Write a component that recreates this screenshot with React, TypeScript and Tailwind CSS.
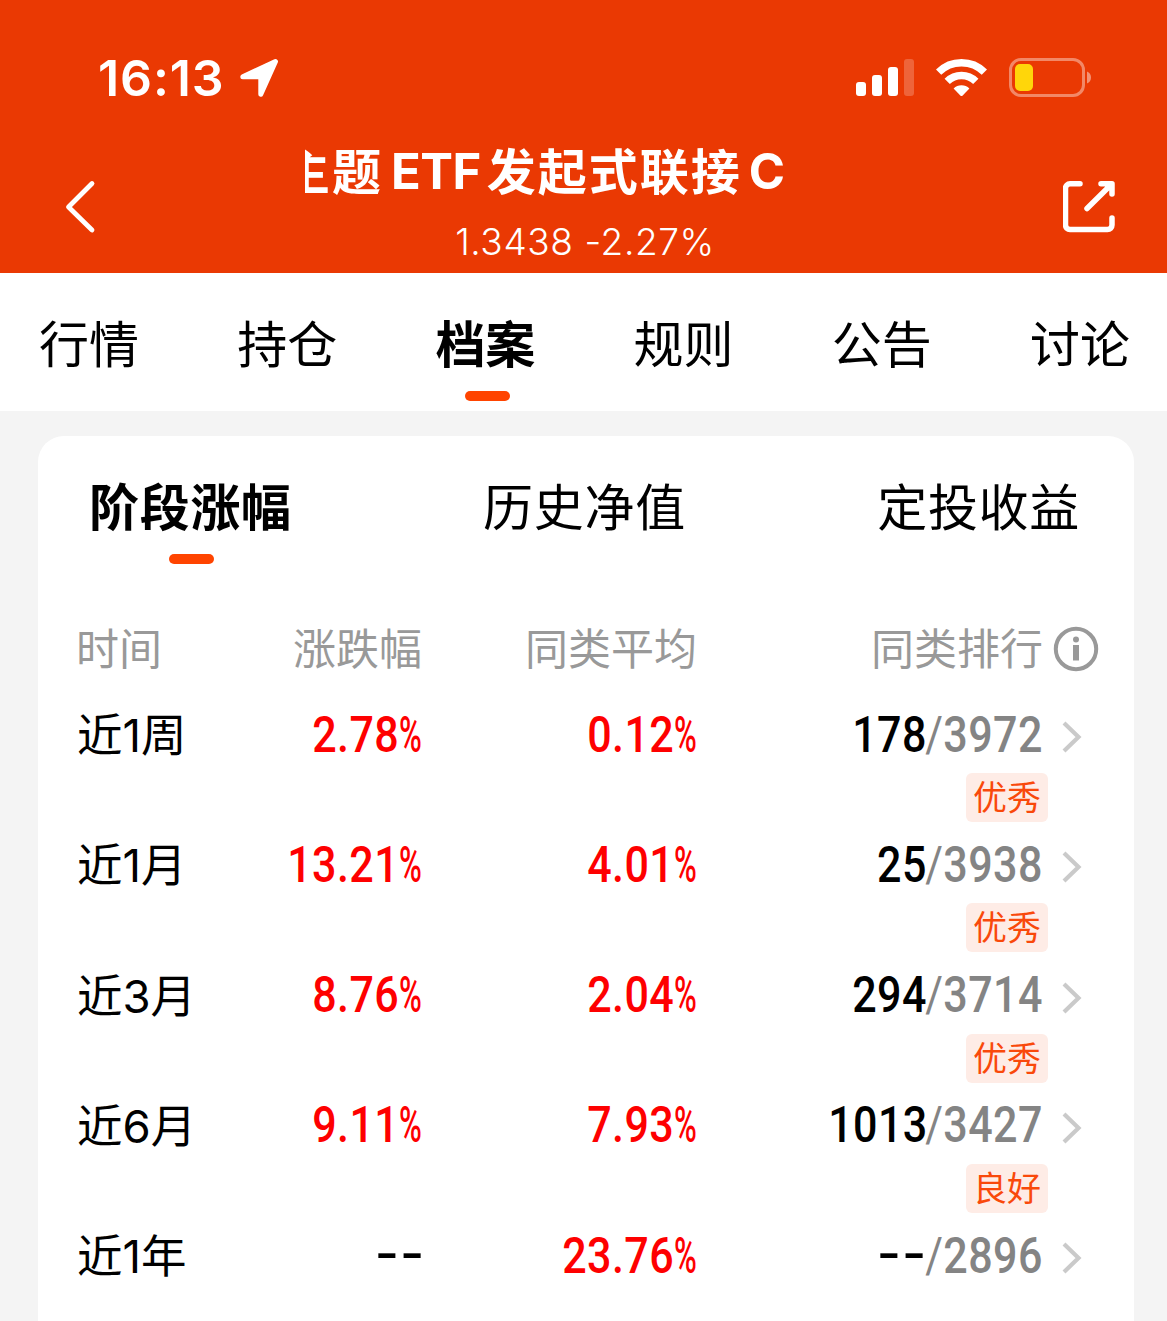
interface RankRow {
  period: string;
  change: string;
  average: string;
  rank: string;
  total: string;
  badge?: string;
}

const mainTabs = ['行情', '持仓', '档案', '规则', '公告', '讨论'];
const subTabs = ['阶段涨幅', '历史净值', '定投收益'];

const rows: RankRow[] = [
  { period: '近1周', change: '2.78', average: '0.12', rank: '178', total: '3972', badge: '优秀' },
  { period: '近1月', change: '13.21', average: '4.01', rank: '25', total: '3938', badge: '优秀' },
  { period: '近3月', change: '8.76', average: '2.04', rank: '294', total: '3714', badge: '优秀' },
  { period: '近6月', change: '9.11', average: '7.93', rank: '1013', total: '3427', badge: '良好' },
  { period: '近1年', change: '--', average: '23.76', rank: '--', total: '2896' },
];

function StatusBar() {
  return (
    <div className="flex h-[120px] items-center pt-9 pr-[75px] pl-[98px]">
      <span className="text-[50px] leading-[60px] font-semibold tracking-[0.9px]">16:13</span>
      <svg className="ml-[14px] h-10 w-10" viewBox="0 0 40 40" fill="currentColor" stroke="currentColor" strokeWidth="5" strokeLinejoin="round">
        <path d="M36.500 3.500L21.800 36.200V18.800H3.800z" />
      </svg>

      <svg className="ml-auto h-[38px] w-[58px]" viewBox="0 0 58 38" fill="currentColor">
        <rect x="0" y="23" width="10" height="14" rx="3" />
        <rect x="16" y="16" width="10" height="21" rx="3" />
        <rect x="32" y="8" width="10" height="29" rx="3" />
        <rect x="48" y="0" width="10" height="37" rx="3" opacity="0.22" />
      </svg>
      <svg className="ml-[22px] h-[38px] w-[51px]" viewBox="0 0 51 38" fill="none" stroke="currentColor">
        <path d="M2.600 13.200A32.500 32.500 0 0 1 48.400 13.200" strokeWidth="7.500" />
        <path d="M11.200 22.400A20.300 20.300 0 0 1 39.800 22.400" strokeWidth="7.500" />
        <path d="M17.600 29.500a11.300 11.300 0 0 1 15.800 0l-6.700 6.900c-.8.800-1.600.8-2.400 0z" fill="currentColor" stroke="none" />
      </svg>
      <svg className="ml-[22px] h-10 w-[83px]" viewBox="0 0 83 40" fill="none">
        <rect x="1.500" y="1.500" width="73" height="36" rx="10.500" stroke="#fff" strokeOpacity="0.4" strokeWidth="3" />
        <rect x="6" y="6" width="18" height="27" rx="5" fill="#ffd60a" />
        <path d="M78 13.500c2.500.8 4 3.200 4 6s-1.500 5.200-4 6z" fill="#fff" fillOpacity="0.45" />
      </svg>
    </div>
  );
}

function TitleBar() {
  return (
    <div className="flex h-[153px] items-start pr-[50px] pl-16">
      <svg className="mt-[60px] h-[54px] w-8" viewBox="0 0 32 54" fill="none" stroke="currentColor" strokeWidth="4.800" strokeLinecap="round" strokeLinejoin="round">
        <path d="M28 3.500L4.500 27L28 50" />
      </svg>
      <div className="ml-[209px] w-[560px] pt-[22px]">
        <div className="overflow-hidden">
          <div className="-ml-[24px] flex text-[49px] leading-[60px] font-bold tracking-[2px] whitespace-nowrap">
            <span className="relative top-px">主题</span>
            <span className="mr-[6px] ml-[8px] tracking-[-0.5px]">ETF</span>
            <span className="relative top-px">发起式联接</span>
            <span className="ml-[7px]">C</span>
          </div>
        </div>
        <p className="mt-4 text-center text-[37px] leading-12 font-[350] tracking-[0.6px]">1.3438 -2.27%</p>
      </div>
      <svg className="mt-[60px] ml-auto h-[54px] w-[54px]" viewBox="0 0 54 54" fill="none" stroke="currentColor" strokeWidth="5.500" strokeLinecap="round" strokeLinejoin="round">
        <path d="M17 3.800H7a4.500 4.500 0 0 0-4.500 4.500V45A4.500 4.500 0 0 0 7 49.500h37.500a4.500 4.500 0 0 0 4.500-4.500v-7" />
        <path d="M38 3.800h11V14M48.500 4.300L24 28.500" />
      </svg>
    </div>
  );
}

function Dashes() {
  return (
    <span className="relative -top-0.5 inline-block origin-right scale-x-[1.32] font-[Roboto,sans-serif] font-medium tracking-[2px]">--</span>
  );
}

function Percent({ value }: { value: string }) {
  if (value === '--') {
    return (
      <div className="-mr-1">
        <Dashes />
      </div>
    );
  }
  return (
    <div className="flex justify-end text-[#fe0000]">
      {/* condensed digits, right aligned */}
      <span className="inline-block origin-right scale-x-[0.86] font-medium tracking-[0.5px]">{value}</span>
      <span className="w-[23px]">
        <span className="inline-block origin-left scale-x-[0.62] font-medium">%</span>
      </span>
    </div>
  );
}

function TableRow({ row }: { row: RankRow }) {
  return (
    <div className="h-[130.3px]">
      <div className="grid h-[62px] grid-cols-[160px_185px_275px_346px_58px] items-center text-right font-[Roboto,'Noto_Sans_CJK_SC',sans-serif] text-[50px] leading-[58px]">
        <span className="text-left font-[Inter,'Noto_Sans_CJK_SC',sans-serif] text-[45.5px] leading-[64px] whitespace-nowrap">{row.period}</span>
        <div className="-mt-[3px]">
          <Percent value={row.change} />
        </div>
        <div className="-mt-[3px]">
          <Percent value={row.average} />
        </div>
        <div className="-mt-[3px] flex justify-end">
          {row.rank === '--' ? (
            <span className="-mr-[22px]">
              <Dashes />
            </span>
          ) : (
            <span className="-mr-[21px] inline-block origin-right scale-x-[0.86] font-medium tracking-[0.5px]">{row.rank}</span>
          )}
          <span className="inline-block origin-right scale-x-[0.86] tracking-[0.5px] text-[#848484]">
            /<span className="font-medium">{row.total}</span>
          </span>
        </div>
        <svg className="mt-0.5 ml-[19px] h-8 w-5" viewBox="0 0 20 32" fill="none" stroke="#cacaca" strokeWidth="4.200">
          <path d="M2 2l14.500 14L2 30" />
        </svg>
      </div>
      {row.badge && (
        <div className="mt-[7px] mr-[86px] flex justify-end">
          <span className="h-[49px] w-[82px] rounded-md bg-[#feece6] text-center text-[34px] leading-[49px] text-[#f9490b]">
            {row.badge}
          </span>
        </div>
      )}
    </div>
  );
}

export default function App() {
  return (
    <div className="flex h-[1321px] w-[1167px] flex-col overflow-hidden bg-[#f4f4f4] font-[Inter,'Noto_Sans_CJK_SC',sans-serif] text-black">
      <header className="h-[273px] shrink-0 bg-[#ea3903] text-white">
        <StatusBar />
        <TitleBar />
      </header>

      <nav className="flex h-[138px] shrink-0 justify-between bg-white pt-[41px] pr-[37px] pl-[39px]">
        {mainTabs.map((tab) => (
          <div key={tab} className="flex flex-col items-center">
            <span className={`text-[50px] leading-[62px] ${tab === '档案' ? 'font-semibold' : ''}`}>{tab}</span>
            {tab === '档案' && <span className="mt-[15px] ml-[4px] h-2.5 w-[45px] rounded-full bg-[#ff4400]" />}
          </div>
        ))}
      </nav>

      <main className="mt-[25px] mr-[33px] ml-[38px] flex-1 rounded-t-[26px] bg-white">
        <div className="flex h-[181px] justify-between pt-[41px] pr-[54px] pl-[51px]">
          {subTabs.map((tab) => (
            <div key={tab} className="flex flex-col items-center">
              <span className={`text-[50px] leading-[62px] tracking-[0.7px] ${tab === '阶段涨幅' ? 'font-semibold' : ''}`}>{tab}</span>
              {tab === '阶段涨幅' && <span className="mt-[15px] ml-0.5 h-2.5 w-[45px] rounded-full bg-[#ff4400]" />}
            </div>
          ))}
        </div>

        <div className="pl-[39px]">
          <div className="grid h-[87px] grid-cols-[160px_185px_275px_346px_58px] text-right text-[43px] leading-[64px] text-[#999]">
            <span className="-ml-px text-left">时间</span>
            <span>涨跌幅</span>
            <span>同类平均</span>
            <span>同类排行</span>
            <svg className="mt-[9px] ml-[10px] h-[46px] w-[46px]" viewBox="0 0 46 46" fill="none">
              <circle cx="23" cy="23" r="20.200" stroke="#999" strokeWidth="4" />
              <circle cx="23" cy="13.500" r="3" fill="#999" />
              <path d="M23 19v15.500" stroke="#999" strokeWidth="6" />
            </svg>
          </div>
          {rows.map((row) => (
            <TableRow key={row.period} row={row} />
          ))}
        </div>
      </main>
    </div>
  );
}
